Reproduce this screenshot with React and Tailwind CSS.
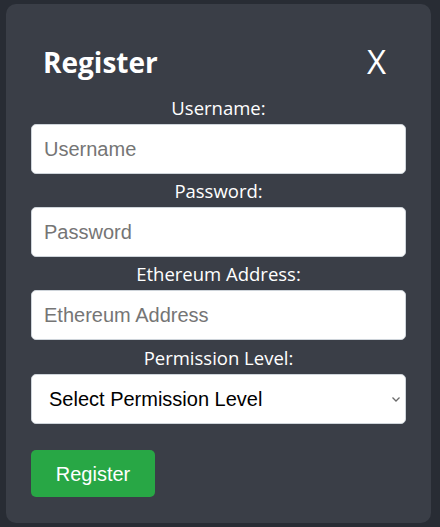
import React from "react";

const Label = ({ children }) => (
  <label className="flex h-[33px] items-center justify-center text-[18.5px] text-white [font-family:'Open_Sans','Noto_Sans',sans-serif]">
    {children}
  </label>
);

const inputCls =
  "block h-[50px] w-full rounded-[5px] border border-[#ced4da] bg-white px-[12px] text-[20px] text-black placeholder:text-[#757575] outline-none [font-family:'Liberation_Sans',Arial,sans-serif]";

export default function App() {
  return (
    <div className="min-h-screen w-full bg-[#282c34] pt-[4px] pl-[6px]">
      <div className="flex h-[519px] w-[425px] flex-col rounded-[10px] bg-[#3a3e47] px-[25px] pt-[25px] pb-[26px]">
        <div className="flex h-[62px] items-center justify-between pl-[12px] pr-[20px] pt-[3px]">
          <h2 className="text-[28px] font-bold leading-none text-white [font-family:'Open_Sans','Noto_Sans',sans-serif]">
            Register
          </h2>
          <button className="text-[33px] leading-none text-white [font-family:'Open_Sans','Noto_Sans',sans-serif]">
            X
          </button>
        </div>
        <Label>Username:</Label>
        <input className={inputCls} placeholder="Username" />
        <Label>Password:</Label>
        <input className={inputCls} type="password" placeholder="Password" />
        <Label>Ethereum Address:</Label>
        <input className={inputCls} placeholder="Ethereum Address" />
        <div className="h-px" />
        <Label>Permission Level:</Label>
        <div className="relative">
          <select className="block h-[50px] w-full appearance-none rounded-[5px] border border-[#ced4da] bg-white pl-[17px] text-[20px] text-black outline-none [font-family:'Liberation_Sans',Arial,sans-serif]">
            <option>Select Permission Level</option>
            <option>Admin</option>
            <option>User</option>
          </select>
          <svg
            className="pointer-events-none absolute right-[5px] top-[21px]"
            width="10"
            height="8"
            viewBox="0 0 10 8"
          >
            <path d="M1.5 2.5 L5 6 L8.5 2.5" fill="none" stroke="#6b6b6b" strokeWidth="1.3" />
          </svg>
        </div>
        <div className="mt-[26px]">
          <button className="h-[47px] w-[124px] rounded-[5px] bg-[#28a745] text-[20px] text-white [font-family:'Liberation_Sans',Arial,sans-serif]">
            Register
          </button>
        </div>
      </div>
    </div>
  );
}
